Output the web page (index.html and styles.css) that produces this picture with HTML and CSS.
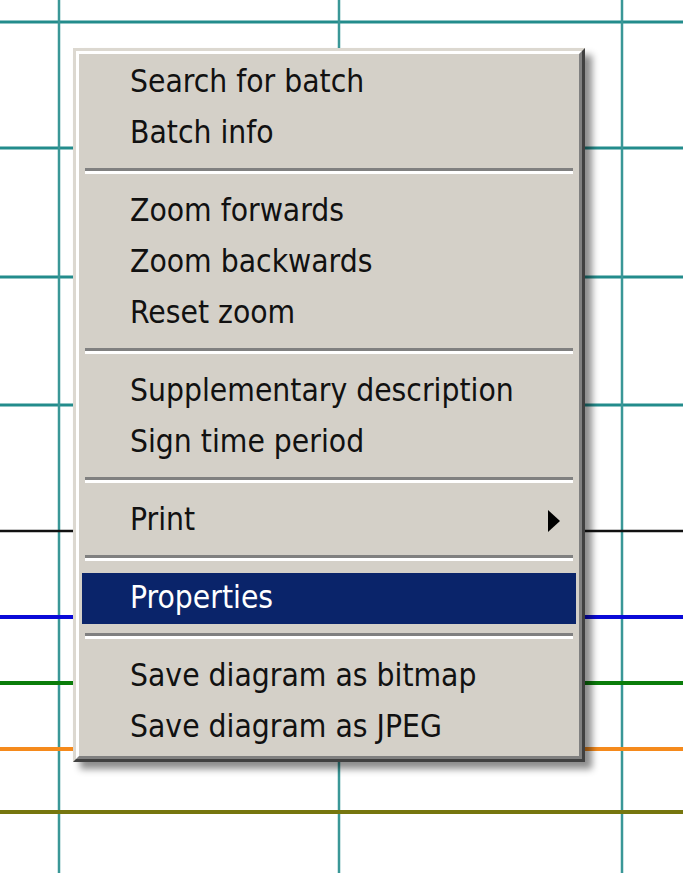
FILE: index.html
```html
<!DOCTYPE html>
<html lang="en">
<head>
    <meta charset="UTF-8">
    <meta name="viewport" content="width=device-width, initial-scale=1.0">
    <title>Diagram menu</title>
    <link rel="stylesheet" href="styles.css">
</head>
<body>
    <div class="chart">
        <!-- 背景网格和曲线 -->
        <svg class="grid" width="683" height="873" viewBox="0 0 683 873">
            <g stroke="#238c8c" stroke-width="3">
                <line x1="0" y1="22" x2="683" y2="22"/>
                <line x1="0" y1="148" x2="683" y2="148"/>
                <line x1="0" y1="277" x2="683" y2="277"/>
                <line x1="0" y1="405" x2="683" y2="405"/>
            </g>
            <g stroke="#3a9797" stroke-width="2.5">
                <line x1="59" y1="0" x2="59" y2="873"/>
                <line x1="339" y1="0" x2="339" y2="873"/>
                <line x1="622" y1="0" x2="622" y2="873"/>
            </g>
            <line x1="0" y1="531" x2="683" y2="531" stroke="#111" stroke-width="2.5"/>
            <line x1="0" y1="617" x2="683" y2="617" stroke="#0a0ad8" stroke-width="4"/>
            <line x1="0" y1="683" x2="683" y2="683" stroke="#0a7d0a" stroke-width="4"/>
            <line x1="0" y1="749" x2="683" y2="749" stroke="#f58a1c" stroke-width="4"/>
            <line x1="0" y1="812" x2="683" y2="812" stroke="#76760e" stroke-width="4"/>
        </svg>

        <!-- 右键菜单 -->
        <div class="menu">
            <div class="menu_inner">
                <ul class="menu_list">
                    <li class="item">Search for batch</li>
                    <li class="item">Batch info</li>
                    <li class="sep"></li>
                    <li class="item">Zoom forwards</li>
                    <li class="item">Zoom backwards</li>
                    <li class="item">Reset zoom</li>
                    <li class="sep"></li>
                    <li class="item">Supplementary description</li>
                    <li class="item">Sign time period</li>
                    <li class="sep"></li>
                    <li class="item">Print <span class="arrow"></span></li>
                    <li class="sep"></li>
                    <li class="item current">Properties</li>
                    <li class="sep"></li>
                    <li class="item">Save diagram as bitmap</li>
                    <li class="item">Save diagram as JPEG</li>
                </ul>
            </div>
        </div>
    </div>
</body>
</html>
```

FILE: styles.css
```css
body{
    margin: 0;
    background-color: #fff;
    font-family: "DejaVu Sans Condensed", "DejaVu Sans", sans-serif;
    font-stretch: condensed;
}
.chart{
    position: relative;
    width: 683px;
    height: 873px;
    overflow: hidden;
}
.grid{
    display: block;
}
/* 菜单外框：经典3D边 */
.menu{
    position: absolute;
    left: 73px;
    top: 48px;
    width: 512px;
    box-sizing: border-box;
    border: 3px solid;
    border-color: #dcd8d0 #404040 #404040 #dcd8d0;
    background-color: #d4d0c8;
    box-shadow: 7px 7px 7px rgba(0,0,0,0.45);
}
.menu_inner{
    border: 3px solid;
    border-color: #fff #808080 #808080 #fff;
    padding: 3px;
}
.menu_list{
    list-style: none;
    margin: 0;
    padding: 0;
}
.item{
    display: flex;
    align-items: center;
    justify-content: space-between;
    box-sizing: border-box;
    height: 51px;
    padding: 0 16px 3px 48px;
    font-size: 31.5px;
    color: #111;
    cursor: default;
}
.item.current{
    background-color: #0a246a;
    color: #fff;
}
.arrow{
    width: 0;
    height: 0;
    margin-top: 3px;
    border-left: 12px solid #000;
    border-top: 11px solid transparent;
    border-bottom: 11px solid transparent;
}
.sep{
    height: 27px;
    box-sizing: border-box;
    padding: 9px 3px 0;
}
.sep::before{
    content: '';
    display: block;
    height: 3px;
    background-color: #808080;
    border-bottom: 3px solid #fff;
}
```
